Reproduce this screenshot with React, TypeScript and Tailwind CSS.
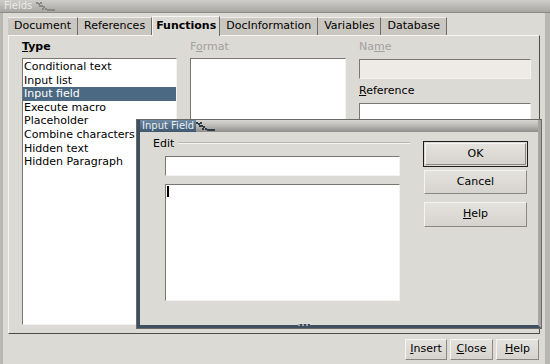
import React from 'react';

const types = [
  'Conditional text',
  'Input list',
  'Input field',
  'Execute macro',
  'Placeholder',
  'Combine characters',
  'Hidden text',
  'Hidden Paragraph',
];

const tabs = ['Document', 'References', 'Functions', 'DocInformation', 'Variables', 'Database'];

function Dots({ dark = false }: { dark?: boolean }) {
  const c = dark ? '#2e3b48' : '#8a8884';
  return (
    <svg width="22" height="9" viewBox="0 0 22 9" className="shrink-0">
      {[
        [0, 0], [2, 1], [4, 0], [3, 3], [5, 3], [7, 4], [6, 6], [9, 6], [11, 7], [13, 7], [15, 7], [17, 7],
      ].map(([x, y], i) => (
        <rect key={i} x={x} y={y} width="2" height="2" fill={c} />
      ))}
    </svg>
  );
}

function Btn({ children, className = '' }: { children: React.ReactNode; className?: string }) {
  return (
    <div
      className={`flex items-center justify-center bg-gradient-to-b from-[#e4e2de] to-[#d6d3ce] border border-t-[#f5f4f2] border-l-[#f5f4f2] border-r-[#8b8883] border-b-[#8b8883] text-[11px] text-black ${className}`}
    >
      {children}
    </div>
  );
}

function Field({ className = '', children }: { className?: string; children?: React.ReactNode }) {
  return (
    <div
      className={`border border-t-[#7a7772] border-l-[#7a7772] border-r-[#f4f3f1] border-b-[#f4f3f1] ${className}`}
    >
      {children}
    </div>
  );
}

export default function App() {
  return (
    <div
      className="relative w-[550px] h-[364px] overflow-hidden bg-[#dcdad5] text-black"
      style={{ fontFamily: '"DejaVu Sans", Verdana, sans-serif' }}
    >
      {/* outer title bar */}
      <div className="h-[13px] flex items-center gap-1 pl-[4px] bg-gradient-to-b from-[#cfcdc9] to-[#a9a7a3] border-b border-[#8d8b87]">
        <span className="text-[10px] leading-none text-[#ececec]">Fields</span>
        <Dots />
      </div>

      <div className="flex flex-col h-[351px] border-l-[3px] border-r-[5px] border-[#b9b7b2] px-[5px]">
        {/* tabs */}
        <div className="flex items-end h-[20px] mt-[2px] text-[11px]">
          {tabs.map((t) => (
            <div
              key={t}
              className={
                t === 'Functions'
                  ? 'h-[20px] px-[3px] flex items-center font-bold bg-[#dcdad5] border-t border-l border-[#f6f5f3] border-r border-r-[#6f6c68] z-10 -mb-px'
                  : 'h-[18px] px-[6px] flex items-center bg-[#cac7c1] border-t border-[#eeedeb] border-r border-r-[#6f6c68]'
              }
            >
              {t}
            </div>
          ))}
        </div>

        {/* tab page */}
        <div className="h-[299px] border border-t-[#f6f5f3] border-l-[#f6f5f3] border-r-[#4e4c49] border-b-[#4e4c49] flex gap-[13px] pl-[13px] pt-[5px]">
          <div className="w-[155px] flex flex-col">
            <div className="text-[11px] font-bold leading-[12px] h-[17px]">
              <span className="underline">T</span>ype
            </div>
            <Field className="h-[267px] bg-white pt-px">
              {types.map((t) => (
                <div
                  key={t}
                  className={`text-[11px] leading-[13.6px] pl-[1px] ${t === 'Input field' ? 'bg-[#4b6983] text-white' : ''}`}
                >
                  {t}
                </div>
              ))}
            </Field>
          </div>

          <div className="w-[156px] flex flex-col">
            <div className="text-[11px] leading-[12px] h-[17px] text-[#a3a19d]">
              F<span className="underline">o</span>rmat
            </div>
            <Field className="h-[267px] bg-white" />
          </div>

          <div className="w-[172px] flex flex-col">
            <div className="text-[11px] leading-[12px] h-[18px] text-[#a3a19d]">
              Na<span className="underline">m</span>e
            </div>
            <Field className="h-[20px] bg-[#eeebe7]" />
            <div className="text-[11px] leading-[12px] mt-[6px] h-[18px]">
              <span className="underline">R</span>eference
            </div>
            <Field className="h-[22px] bg-white" />
          </div>
        </div>

        {/* bottom buttons */}
        <div className="flex justify-end gap-[3px] mt-[5px] pr-[1px]">
          <Btn className="w-[42px] h-[21px]">
            <span className="underline">I</span>nsert
          </Btn>
          <Btn className="w-[43px] h-[21px]">
            <span className="underline">C</span>lose
          </Btn>
          <Btn className="w-[43px] h-[21px]">
            <span className="underline">H</span>elp
          </Btn>
        </div>
      </div>

      {/* Input Field dialog */}
      <div className="absolute left-[137px] top-[120px] w-[404px] h-[208px] flex flex-col bg-[#dcdad5] border-l-[3px] border-b-[3px] border-r-[3px] border-l-[#3e4f60] border-b-[#3e4f60] border-r-[#a7a5a1] shadow-[0_0_0_1px_#6b6965]">
        <div className="h-[12px] flex items-center bg-gradient-to-b from-[#d9d7d3] via-[#bab8b4] to-[#8f8d89]">
          <div className="h-full flex items-center px-[2px] bg-gradient-to-b from-[#6e89a3] to-[#3f5870]">
            <span className="text-[10px] leading-none text-[#e8eef4]">Input Field</span>
          </div>
          <Dots dark />
        </div>

        <div className="flex flex-1">
          <div className="w-[270px] flex flex-col pl-[13px] pt-[5px]">
            <div className="flex items-center gap-[4px] h-[12px]">
              <span className="text-[11px] leading-none">Edit</span>
              <div className="flex-1 h-[2px] border-t border-[#b9b7b2] border-b border-b-[#f4f3f1]" />
            </div>
            <Field className="ml-[12px] mt-[7px] w-[235px] h-[20px] bg-white" />
            <Field className="ml-[12px] mt-[8px] w-[235px] h-[117px] bg-white p-[1px]">
              <div className="w-[2px] h-[11px] bg-black" />
            </Field>
          </div>

          <div className="flex flex-col pl-[13px] pt-[9px]">
            <div className="w-[105px] h-[26px] border border-[#1d1c1b] p-px">
              <Btn className="w-full h-full">OK</Btn>
            </div>
            <Btn className="w-[103px] h-[24px] mt-[3px] ml-px">Cancel</Btn>
            <Btn className="w-[103px] h-[25px] mt-[8px] ml-px">
              <span className="underline">H</span>elp
            </Btn>
          </div>
        </div>
      </div>
      <div className="absolute left-[298px] top-[324px] w-[12px] h-[2px] bg-[repeating-linear-gradient(90deg,#9aa6b2_0_2px,#3e4f60_2px_4px)]" />
    </div>
  );
}
